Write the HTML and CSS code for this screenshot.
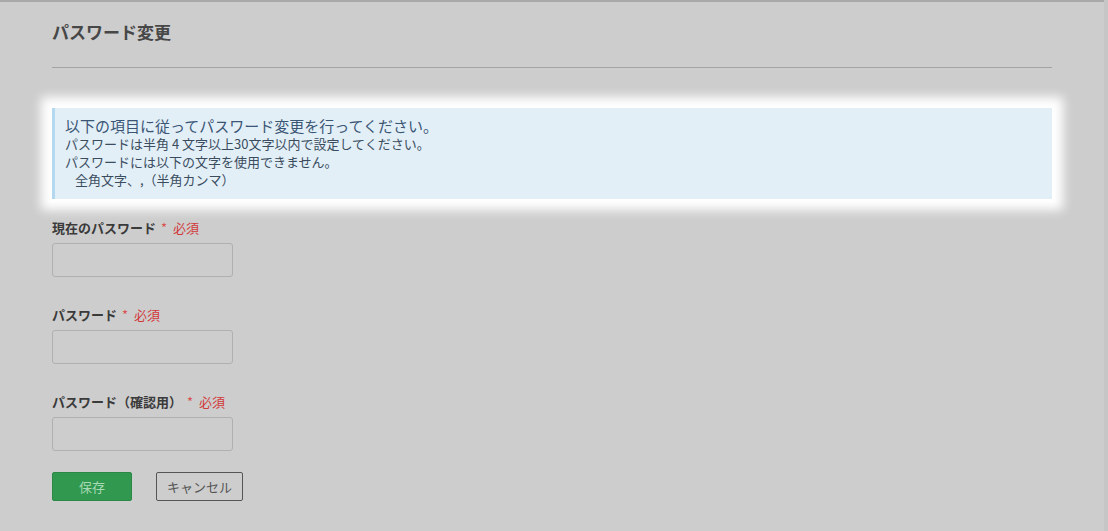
FILE: index.html
```html
<!DOCTYPE html>
<html lang="ja">
<head>
    <meta charset="UTF-8">
    <meta name="viewport" content="width=device-width, initial-scale=1.0">
    <title>パスワード変更</title>
    <link rel="stylesheet" href="styles.css">
</head>
<body>
    <div class="pagina">
        <div class="contenido">
            <h1 class="titulo">パスワード変更</h1>

            <div class="aviso">
                <p class="aviso-principal">以下の項目に従ってパスワード変更を行ってください。</p>
                <p>パスワードは半角 4 文字以上30文字以内で設定してください。</p>
                <p>パスワードには以下の文字を使用できません。</p>
                <p class="aviso-sangria">全角文字、,（半角カンマ）</p>
            </div>

            <form class="formulario">
                <div class="campo">
                    <label>現在のパスワード <span class="req"><span class="ast">*</span>必須</span></label>
                    <input type="password">
                </div>
                <div class="campo">
                    <label>パスワード <span class="req"><span class="ast">*</span>必須</span></label>
                    <input type="password">
                </div>
                <div class="campo">
                    <label>パスワード（確認用） <span class="req"><span class="ast">*</span>必須</span></label>
                    <input type="password">
                </div>
                <div class="botones">
                    <button type="button" class="btn-guardar">保存</button>
                    <button type="button" class="btn-cancelar">キャンセル</button>
                </div>
            </form>
        </div>
        <div class="barra"></div>
    </div>
</body>
</html>
```

FILE: styles.css
```css
html, body { margin: 0; padding: 0; }
body {
    background: #cdcdcd;
    font-family: "Noto Sans CJK JP", "Noto Sans", sans-serif;
    color: #3d3d3d;
}

.pagina {
    display: flex;
    min-height: 531px;
}

.contenido {
    width: 1104px;
    border-top: 2px solid #a9a9a9;
    box-sizing: border-box;
    padding: 0 52px 0 52px;
}

/* barra lateral derecha */
.barra {
    flex: 1;
    background: #c6c6c6;
}

.titulo {
    margin: 0;
    padding: 17px 0 22px;
    font-size: 17px;
    line-height: 26px;
    font-weight: bold;
    color: #474747;
    border-bottom: 1px solid #a3a3a3;
}

/* caja resaltada */
.aviso {
    margin-top: 40px;
    background: #e2eff7;
    border-left: 3px solid #b3d8ef;
    padding: 9px 10px 10px 10px;
    box-shadow: 0 0 10px 11px #fff;
    color: #3a4c5e;
    font-size: 13px;
    line-height: 18px;
}

.aviso p { margin: 0; }

.aviso-principal {
    font-size: 15px;
    color: #3b5575;
}

.aviso-sangria { padding-left: 10px; }

.formulario { margin-top: 20px; }

.campo {
    display: flex;
    flex-direction: column;
    align-items: flex-start;
    margin-bottom: 29px;
}

.campo label {
    font-size: 13px;
    line-height: 18px;
    font-weight: bold;
    color: #3a3a3a;
    margin-bottom: 6px;
}

.req {
    color: #d2393a;
    font-weight: normal;
    margin-left: 2px;
}

.ast {
    color: #d9534f;
    margin-right: 6px;
}

.campo input {
    width: 181px;
    height: 34px;
    box-sizing: border-box;
    background: #cdcdcd;
    border: 1px solid #b0b0b0;
    border-radius: 3px;
}

.botones {
    display: flex;
    gap: 24px;
    margin-top: -8px;
}

.btn-guardar, .btn-cancelar {
    height: 29px;
    font-family: inherit;
    font-size: 13px;
    border-radius: 2px;
}

.btn-guardar {
    width: 80px;
    background: #319850;
    border: 1px solid #2b8847;
    color: #a5d8b3;
}

.btn-cancelar {
    width: 87px;
    background: transparent;
    border: 1px solid #555;
    color: #555;
}
```
